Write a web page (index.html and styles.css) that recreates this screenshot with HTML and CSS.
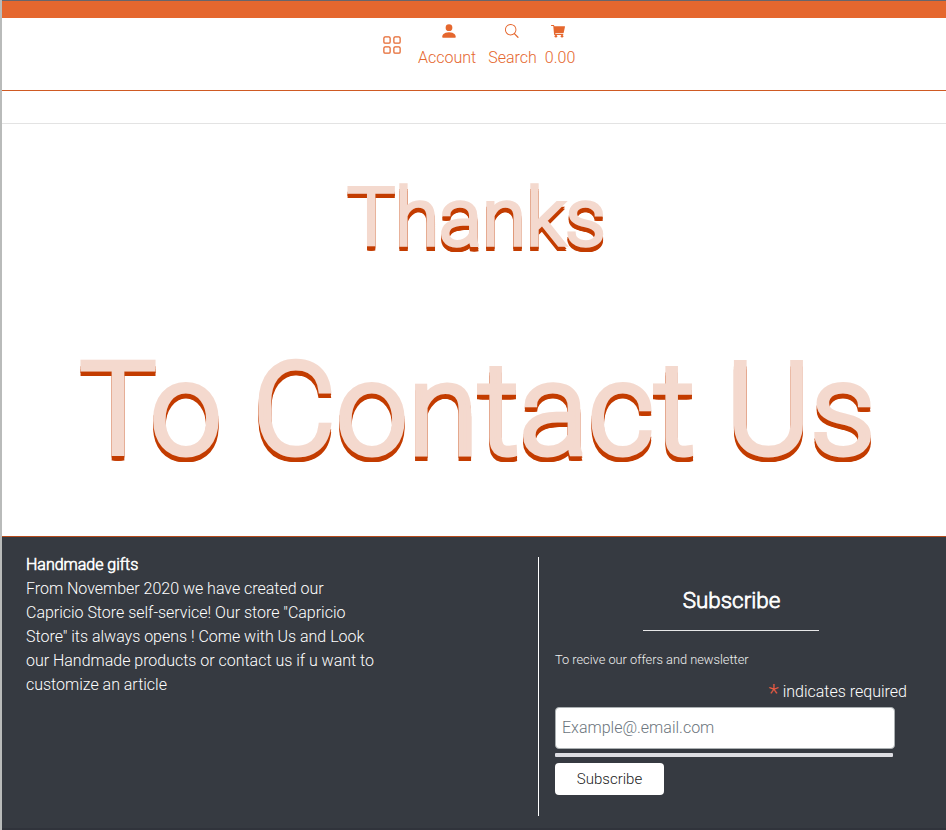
FILE: index.html
```html
<!DOCTYPE html>
<html lang="en">
<head>
<meta charset="utf-8">
<title>Capricio Store</title>
<link rel="stylesheet" href="styles.css">
</head>
<body>
<div class="page">
  <div class="topbar"></div>
  <header class="header">
    <a class="grid-link"><svg width="20" height="20" viewBox="0 0 16 16" fill="currentColor"><path d="M1 2.500A1.500 1.500 0 0 1 2.500 1h3A1.500 1.500 0 0 1 7 2.500v3A1.500 1.500 0 0 1 5.500 7h-3A1.500 1.500 0 0 1 1 5.500v-3zM2.500 2a.5.5 0 0 0-.5.5v3a.5.5 0 0 0 .5.5h3a.5.5 0 0 0 .5-.5v-3a.5.5 0 0 0-.5-.5h-3zm6.500.5A1.500 1.500 0 0 1 10.500 1h3A1.500 1.500 0 0 1 15 2.500v3A1.500 1.500 0 0 1 13.500 7h-3A1.500 1.500 0 0 1 9 5.500v-3zm1.500-.5a.5.5 0 0 0-.5.5v3a.5.5 0 0 0 .5.5h3a.5.5 0 0 0 .5-.5v-3a.5.5 0 0 0-.5-.5h-3zM1 10.500A1.500 1.500 0 0 1 2.500 9h3A1.500 1.500 0 0 1 7 10.500v3A1.500 1.500 0 0 1 5.500 15h-3A1.500 1.500 0 0 1 1 13.500v-3zm1.500-.5a.5.5 0 0 0-.5.5v3a.5.5 0 0 0 .5.5h3a.5.5 0 0 0 .5-.5v-3a.5.5 0 0 0-.5-.5h-3zm6.500.5A1.500 1.500 0 0 1 10.500 9h3a1.500 1.500 0 0 1 1.500 1.500v3a1.500 1.500 0 0 1-1.500 1.500h-3A1.500 1.500 0 0 1 9 13.500v-3zm1.500-.5a.5.5 0 0 0-.5.5v3a.5.5 0 0 0 .5.5h3a.5.5 0 0 0 .5-.5v-3a.5.5 0 0 0-.5-.5h-3z"/></svg></a>
    <a class="nav account"><svg width="18" height="18" viewBox="0 0 16 16" fill="currentColor"><path d="M3 14s-1 0-1-1 1-4 6-4 6 3 6 4-1 1-1 1H3zm5-6a3 3 0 1 0 0-6 3 3 0 0 0 0 6z"/></svg><span>Account</span></a>
    <a class="nav search"><svg width="14" height="14" viewBox="0 0 16 16" fill="currentColor"><path d="M11.742 10.344a6.500 6.500 0 1 0-1.397 1.398c.03.04.062.078.098.115l3.850 3.850a.7.7 0 0 0 1-1l-3.850-3.850a1 1 0 0 0-.115-.1zM12 6.500a5.500 5.500 0 1 1-11 0 5.500 5.500 0 0 1 11 0z"/></svg><span>Search</span></a>
    <a class="nav cart"><svg width="14" height="14" viewBox="0 0 16 16" fill="currentColor"><path d="M0 1.500A.5.5 0 0 1 .5 1H3a.5.5 0 0 1 .485.379L3.890 2.500H15.500a.5.5 0 0 1 .491.592l-1.500 7A.5.5 0 0 1 14 10.500H5v1h9v1H4a.5.5 0 0 1-.491-.408L2.610 2.300H.5a.5.5 0 0 1-.5-.8z"/><circle cx="5.600" cy="14" r="1.500"/><circle cx="12.600" cy="14" r="1.500"/></svg><span>0.00</span></a>
  </header>
  <div class="strip"></div>
  <main class="main">
    <h2 class="title small">Thanks</h2>
    <h1 class="title large">To Contact Us</h1>
  </main>
  <footer class="footer">
    <section class="about">
      <strong>Handmade gifts</strong>
      <p>From November 2020 we have created our Capricio Store self-service! Our store "Capricio Store" its always opens ! Come with Us and Look our Handmade products or contact us if u want to customize an article</p>
    </section>
    <section class="subscribe">
      <h3>Subscribe</h3>
      <hr>
      <p class="offer">To recive our offers and newsletter</p>
      <p class="required"><span>*</span> indicates required</p>
      <input type="email" placeholder="Example@.email.com">
      <div class="response"></div>
      <button>Subscribe</button>
    </section>
  </footer>
</div>
</body>
</html>
```
FILE: styles.css
```css
* { box-sizing: border-box; }
body { margin: 0; background: #fff; color: #fff; font: 300 16px/24px Roboto, sans-serif; }
h1, h2, h3, p { margin: 0; }
.page { height: 830px; border-left: 2px solid #b9bbba; display: flex; flex-direction: column; overflow: hidden; }
.topbar { height: 18px; background: #e5672e; border-top: 1px solid #68656b; flex: none; }
.header { height: 73px; flex: none; border-bottom: 1px solid #cf5a23; color: #e5672e; display: flex; align-items: flex-start; padding: 4px 0 0 380px; }
.header svg { display: block; }
.grid-link { margin-top: 13px; width: 20px; }
.nav { display: flex; flex-direction: column; align-items: center; white-space: nowrap; }
.nav svg { margin: 2px 0; }
.nav span { margin-top: auto; }
.nav { height: 48px; }
.account { margin-left: 16px; }
.account svg { margin: 0 0 0 4px; }
.search { margin-left: 12px; }
.search svg { margin-right: 2px; }
.cart { margin-left: 8px; }
.cart svg { margin-right: 4px; }
.strip { height: 33px; flex: none; border-bottom: 1px solid #e3e3e3; }
.main { height: 412px; flex: none; text-align: center; padding: 46px 0 0 5px; }
.title { color: #f4d9ce; font-weight: 300; white-space: nowrap; }
.small {
  font-size: 80px; line-height: 96px; -webkit-text-stroke: 3.6px #f4d9ce;
  text-shadow: -1.8px 6px #c33c00, -1px 6px #c33c00, 0 6px #c33c00, 1px 6px #c33c00, 1.8px 6px #c33c00, -1.8px 4px #c33c00, 1.8px 4px #c33c00;
}
.large {
  font-size: 128px; line-height: 154px; margin: 67px -1px 0 1px; -webkit-text-stroke: 5px #f4d9ce;
  text-shadow: -2.5px 7px #c33c00, -1px 7px #c33c00, 0 7px #c33c00, 1px 7px #c33c00, 2.5px 7px #c33c00, -2.5px 4px #c33c00, 2.5px 4px #c33c00;
}
.footer { flex: 1; background: #363a41; border-top: 1px solid #b64c1d; border-bottom: 2px solid #30333b; display: flex; padding: 15px 0 0 24px; }
.about { width: 352px; padding-top: 1px; letter-spacing: -.015px; }
.about strong { display: block; font-weight: 300; -webkit-text-stroke: .6px #fff; }
.subscribe { margin: 5px 0 0 160px; width: 380px; height: 259px; border-left: 1px solid #fff; padding: 29px 0 0 16px; }
.subscribe h3 { font-size: 22.4px; line-height: 28px; font-weight: 300; -webkit-text-stroke: .8px #fff; text-align: center; margin-right: 10px; }
.subscribe hr { width: 176px; height: 1px; border: 0; background: #e7e7e8; margin: 16px 0 0 88px; }
.offer { font-size: 12.8px; line-height: 20px; color: #f0f0f0; margin-top: 19px; }
.required { text-align: right; margin: 10px 11px 3px 0; height: 24px; }
.required span { color: #e85c41; font-size: 24px; vertical-align: -4px; line-height: 20px; }
.subscribe input { display: block; width: 340px; height: 42px; border: 1px solid #abb0b2; border-radius: 4px; padding: 0 6px 2px; font: 300 16px Roboto, sans-serif; background: #fff; }
.subscribe input::placeholder { color: #6c757d; }
.response { width: 338px; height: 4px; border-radius: 1px; background: #dddde2; margin: 4px 0 6px; }
.subscribe button { width: 109px; height: 32px; border: 0; border-radius: 4px; background: #fff; color: #222; font: 300 15px Roboto, sans-serif; padding: 0; }
```
